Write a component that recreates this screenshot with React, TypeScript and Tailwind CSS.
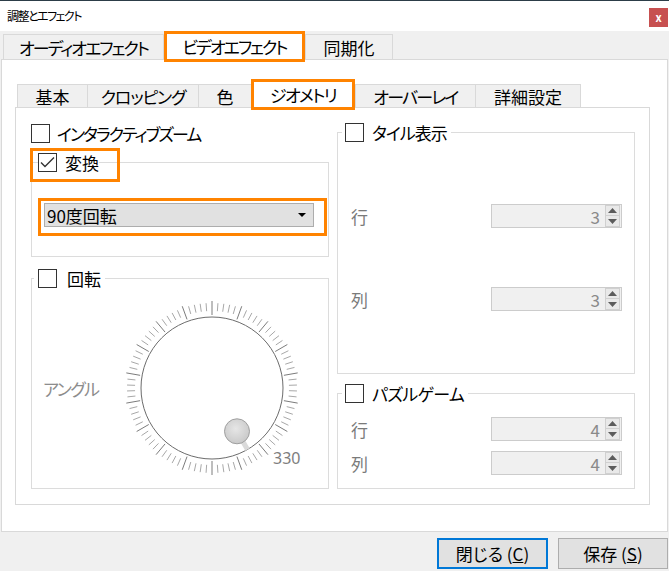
import React from 'react';

const CheckBox: React.FC<{ checked?: boolean }> = ({ checked }) => (
  <span className="flex h-[19px] w-[19px] shrink-0 items-center justify-center border border-[#333333] bg-white">
    {checked && (
      <svg width="17" height="17" viewBox="0 0 17 17" fill="none">
        <path d="M2 8.5 L6 12.5 L15 3.5" stroke="#333333" strokeWidth="1.4" />
      </svg>
    )}
  </span>
);

const SpinBox: React.FC<{ value: number }> = ({ value }) => (
  <div className="flex h-[24px] w-[131px] items-center justify-end border border-[#cccccc] bg-[#f0f0f0]">
    <span className="text-[17px] leading-none text-[#8a8a8a]">{value}</span>
    <div className="ml-[5px] mr-[1px] flex flex-col">
      <span className="flex h-[11px] w-[15px] items-center justify-center border border-[#d0d0d0] bg-[#e9e9e9]">
        <svg width="9" height="5" viewBox="0 0 9 5">
          <path d="M0 5 L4.5 0 L9 5 Z" fill="#5c5c5c" />
        </svg>
      </span>
      <span className="flex h-[11px] w-[15px] items-center justify-center border border-t-0 border-[#d0d0d0] bg-[#e9e9e9]">
        <svg width="9" height="5" viewBox="0 0 9 5">
          <path d="M0 0 L9 0 L4.5 5 Z" fill="#5c5c5c" />
        </svg>
      </span>
    </div>
  </div>
);

const SpinRow: React.FC<{ label: string; value: number }> = ({ label, value }) => (
  <div className="flex items-center justify-between pl-[13px] pr-[12px]">
    <span className="text-[17px] leading-none text-[#7a7a7a]">{label}</span>
    <SpinBox value={value} />
  </div>
);

const Dial: React.FC = () => {
  const cx = 95;
  const cy = 95;
  const ticks = Array.from({ length: 90 }, (_, i) => {
    const a = (i * 4 * Math.PI) / 180;
    const major = i % 5 === 0;
    const r1 = major ? 73 : 77;
    const r2 = major ? 87 : 85;
    const s = Math.sin(a);
    const c = Math.cos(a);
    return (
      <line
        key={i}
        x1={cx + r1 * s}
        y1={cy - r1 * c}
        x2={cx + r2 * s}
        y2={cy - r2 * c}
        stroke={major ? '#7c7c7c' : '#a8a8a8'}
        strokeWidth={1}
      />
    );
  });
  const ka = (150 * Math.PI) / 180;
  const ks = Math.sin(ka);
  const kc = Math.cos(ka);

  return (
    <svg width="190" height="190" viewBox="0 0 190 190" className="shrink-0">
      <defs>
        <radialGradient id="knob" cx="0.45" cy="0.4" r="0.6">
          <stop offset="0" stopColor="#e6e6e6" />
          <stop offset="1" stopColor="#c9c9c9" />
        </radialGradient>
      </defs>
      {ticks}
      <circle cx={cx} cy={cy} r={71} fill="#ffffff" stroke="#6c6c6c" strokeWidth={1} />
      <line
        x1={cx + 62 * ks}
        y1={cy - 62 * kc}
        x2={cx + 71 * ks}
        y2={cy - 71 * kc}
        stroke="#dadada"
        strokeWidth={5}
      />
      <circle cx={cx + 50 * ks} cy={cy - 50 * kc} r={12.5} fill="url(#knob)" stroke="#a0a0a0" strokeWidth={1} />
      <text x={156} y={171} fontSize={16} fill="#7e7e7e" fontFamily="'Noto Sans', sans-serif">
        330
      </text>
    </svg>
  );
};

const App: React.FC = () => {
  return (
    <div className="flex h-[571px] w-[669px] flex-col overflow-hidden border-t border-[#2c3d48] bg-[#f0f0f0] font-['Noto_Sans_CJK_JP',sans-serif] text-black [font-feature-settings:'palt']">
      {/* title bar */}
      <div className="flex h-[30px] shrink-0 items-start justify-between bg-white pl-[7px] pr-[1px]">
        <span className="self-center text-[12px] leading-none tracking-[-1.5px]">調整とエフェクト</span>
        <span className="mt-[7px] flex h-[19px] w-[19px] items-center justify-center bg-[#c75050] text-[11px] font-bold leading-none text-white">
          x
        </span>
      </div>

      {/* top tabs */}
      <div className="flex h-[28px] shrink-0 items-end pl-[3px] text-[17px] leading-none">
        <div className="flex h-[25px] w-[161px] items-center justify-center border border-b-0 border-[#d9d9d9] tracking-[-2px]">
          オーディオエフェクト
        </div>
        <div className="relative z-10 -mb-[3px] flex h-[31px] w-[141px] items-center justify-center border-[3px] border-[#ff8300] bg-white tracking-[-2px]">
          ビデオエフェクト
        </div>
        <div className="flex h-[25px] w-[88px] items-center justify-center border border-b-0 border-[#d9d9d9]">
          同期化
        </div>
      </div>

      {/* main panel */}
      <div className="ml-[1px] flex h-[473px] w-[667px] shrink-0 flex-col border border-[#d9d9d9] bg-white">
        {/* inner tabs */}
        <div className="mt-[19px] ml-[15px] flex h-[28px] items-end text-[17px] leading-none">
          <div className="flex h-[23px] w-[70px] items-center justify-center border-l border-t border-[#d9d9d9] bg-[#f0f0f0]">基本</div>
          <div className="flex h-[23px] w-[111px] items-center justify-center border-l border-t border-[#d9d9d9] bg-[#f0f0f0] tracking-[-1.2px]">クロッピング</div>
          <div className="flex h-[23px] w-[53px] items-center justify-center border-l border-t border-[#d9d9d9] bg-[#f0f0f0]">色</div>
          <div className="relative z-10 -mb-[3px] flex h-[31px] w-[104px] items-center justify-center border-[3px] border-[#ff8300] bg-white tracking-[-1.6px]">
            ジオメトリ
          </div>
          <div className="flex h-[23px] w-[120px] items-center justify-center border-l border-t border-[#d9d9d9] bg-[#f0f0f0] tracking-[-1.8px]">オーバーレイ</div>
          <div className="flex h-[23px] w-[106px] items-center justify-center border-x border-t border-[#d9d9d9] bg-[#f0f0f0]">詳細設定</div>
        </div>

        {/* inner panel */}
        <div className="ml-[13px] flex h-[398px] w-[635px] gap-[8px] border border-[#d9d9d9] bg-white pl-[15px] text-[17px] leading-none">
          {/* left column */}
          <div className="flex w-[298px] flex-col">
            <div className="mt-[16px] flex h-[19px] items-center gap-[7px]">
              <CheckBox />
              <span className="tracking-[-2px]">インタラクティブズーム</span>
            </div>

            <fieldset className="mt-[9px] border border-[#dcdcdc] pb-[29px]">
              <legend className="ml-[6px]">
                <div className="relative flex h-[20px] items-center gap-[8px]">
                  <CheckBox checked />
                  <span>変換</span>
                  <span className="absolute -top-[4px] -bottom-[10px] -left-[8px] -right-[21px] border-[3px] border-[#ff8300]" />
                </div>
              </legend>
              <div className="relative ml-[12px] mt-[31px] flex h-[24px] w-[270px] items-center justify-between border border-[#adadad] bg-[#e1e1e1] pl-[2px] pr-[7px]">
                <span>90度回転</span>
                <svg width="8" height="4" viewBox="0 0 8 4">
                  <path d="M0 0 L8 0 L4 4 Z" fill="#000000" />
                </svg>
                <span className="absolute -top-[6px] -bottom-[10px] -left-[7px] -right-[14px] border-[3px] border-[#ff8300]" />
              </div>
            </fieldset>

            <fieldset className="mt-[11px] border border-[#dcdcdc]">
              <legend className="ml-[2px] pl-[4px] pr-[4px]">
                <div className="flex h-[20px] items-center gap-[10px]">
                  <CheckBox />
                  <span>回転</span>
                </div>
              </legend>
              <div className="flex h-[200px] items-center">
                <span className="ml-[11px] w-[56px] shrink-0 whitespace-nowrap tracking-[-1.5px] text-[#8c8c8c]">アングル</span>
                <div className="ml-[18px]">
                  <Dial />
                </div>
              </div>
            </fieldset>
          </div>

          {/* right column */}
          <div className="flex w-[298px] flex-col">
            <fieldset className="mt-[14px] border border-[#dcdcdc] pt-[62px] pb-[62px]">
              <legend className="ml-[4px] pl-[3px] pr-[4px]">
                <div className="flex h-[20px] items-center gap-[8px]">
                  <CheckBox />
                  <span className="tracking-[-1px]">タイル表示</span>
                </div>
              </legend>
              <div className="flex flex-col gap-[59px]">
                <SpinRow label="行" value={3} />
                <SpinRow label="列" value={3} />
              </div>
            </fieldset>

            <fieldset className="mt-[9px] border border-[#dcdcdc] pt-[14px] pb-[13px]">
              <legend className="ml-[4px] pl-[3px] pr-[4px]">
                <div className="flex h-[20px] items-center gap-[8px]">
                  <CheckBox />
                  <span className="tracking-[-0.7px]">パズルゲーム</span>
                </div>
              </legend>
              <div className="flex flex-col gap-[10px]">
                <SpinRow label="行" value={4} />
                <SpinRow label="列" value={4} />
              </div>
            </fieldset>
          </div>
        </div>
      </div>

      {/* buttons */}
      <div className="mt-[6px] flex justify-end gap-[10px] pr-[1px] text-[17px] leading-none">
        <button className="flex h-[31px] w-[111px] items-center justify-center border-2 border-[#0078d7] bg-[#e1e1e1]">
          閉じる (<span className="underline">C</span>)
        </button>
        <button className="flex h-[31px] w-[110px] items-center justify-center border border-[#adadad] bg-[#e1e1e1]">
          保存 (<span className="underline">S</span>)
        </button>
      </div>
    </div>
  );
};

export default App;
